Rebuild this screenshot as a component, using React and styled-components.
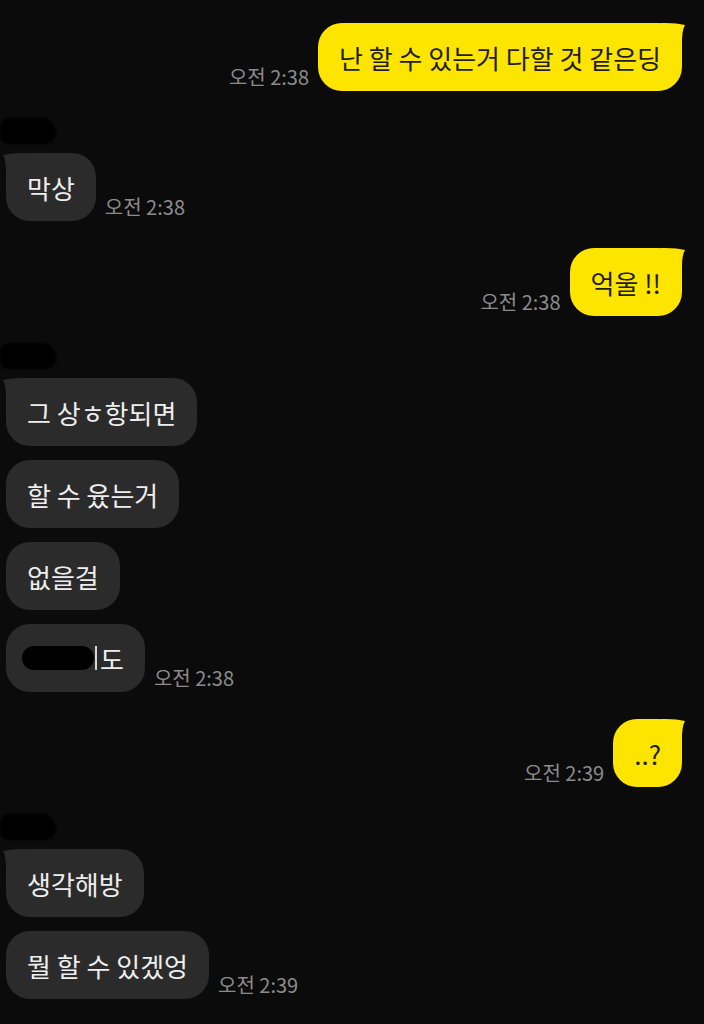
import React from 'react';
import styled, { createGlobalStyle } from 'styled-components';

const GlobalStyle = createGlobalStyle`
  html, body {
    margin: 0;
    padding: 0;
    background: #0b0b0b;
  }
  body {
    font-family: "Noto Sans CJK KR", "Noto Sans", sans-serif;
  }
`;

const Chat = styled.div`
  width: 704px;
  height: 1024px;
  overflow: hidden;
  box-sizing: border-box;
  padding-top: 23px;
  background: #0b0b0b;
  display: flex;
  flex-direction: column;
  gap: 27px;
`;

const Group = styled.div`
  display: flex;
  flex-direction: column;
  align-items: ${p => (p.$mine ? 'flex-end' : 'flex-start')};
  padding: ${p => (p.$mine ? '0 22px 0 0' : '0 0 0 6px')};
`;

const Name = styled.div`
  width: 56px;
  height: 26px;
  margin: 0 0 9px -6px;
  background: #000;
  border-radius: 12px 18px 14px 10px;
  filter: blur(0.8px);
`;

const Stack = styled.div`
  display: flex;
  flex-direction: column;
  align-items: inherit;
  gap: 14px;
`;

const Row = styled.div`
  display: flex;
  align-items: flex-end;
  gap: 9px;
`;

const Bubble = styled.div`
  position: relative;
  height: 68px;
  box-sizing: border-box;
  padding: 0 21px;
  display: flex;
  align-items: center;
  border-radius: 24px;
  font-size: 26px;
  white-space: nowrap;
  background: ${p => (p.$mine ? '#fee500' : '#2b2b2b')};
  color: ${p => (p.$mine ? '#1e1e1e' : '#eeeeee')};
`;

const TailSvg = styled.svg`
  position: absolute;
  top: -1px;
  ${p => (p.$mine ? 'right: -4px;' : 'left: -4px;')}
  transform: ${p => (p.$mine ? 'scaleX(-1)' : 'none')};
`;

const Time = styled.span`
  font-size: 20px;
  line-height: 24px;
  margin-bottom: 2px;
  color: #8b8b8b;
  white-space: nowrap;
`;

const Redacted = styled.span`
  display: inline-block;
  width: 72px;
  height: 24px;
  margin-left: -5px;
  background: #000;
  border-radius: 12px;
  filter: blur(0.6px);
`;

const Stroke = styled.span`
  display: inline-block;
  width: 2px;
  height: 24px;
  margin: 0 3px 0 1px;
  background: #d6d6d6;
`;

function Tail({ mine }) {
  return (
    <TailSvg $mine={mine} width="28" height="26" viewBox="0 0 28 26">
      <path
        d="M1 3 Q10 0.5 26 1 L26 24 L4 24 Q4.5 9 1 3 Z"
        fill={mine ? '#fee500' : '#2b2b2b'}
      />
    </TailSvg>
  );
}

const groups = [
  { mine: true, msgs: ['난 할 수 있는거 다할 것 같은딩'], time: '오전 2:38' },
  { mine: false, msgs: ['막상'], time: '오전 2:38' },
  { mine: true, msgs: ['억울 !!'], time: '오전 2:38' },
  {
    mine: false,
    msgs: ['그 상ㅎ항되면', '할 수 윴는거', '없을걸', 'REDACTED'],
    time: '오전 2:38',
  },
  { mine: true, msgs: ['..?'], time: '오전 2:39' },
  { mine: false, msgs: ['생각해방', '뭘 할 수 있겠엉'], time: '오전 2:39' },
];

function MessageText({ text }) {
  if (text === 'REDACTED') {
    return (
      <>
        <Redacted />
        <Stroke />
        도
      </>
    );
  }
  return text;
}

function App() {
  return (
    <>
      <GlobalStyle />
      <Chat>
        {groups.map((g, gi) => (
          <Group key={gi} $mine={g.mine}>
            {!g.mine && <Name />}
            <Stack>
              {g.msgs.map((m, i) => {
                const last = i === g.msgs.length - 1;
                return (
                  <Row key={i}>
                    {g.mine && last && <Time>{g.time}</Time>}
                    <Bubble $mine={g.mine}>
                      {i === 0 && <Tail mine={g.mine} />}
                      <MessageText text={m} />
                    </Bubble>
                    {!g.mine && last && <Time>{g.time}</Time>}
                  </Row>
                );
              })}
            </Stack>
          </Group>
        ))}
      </Chat>
    </>
  );
}

export default App;
